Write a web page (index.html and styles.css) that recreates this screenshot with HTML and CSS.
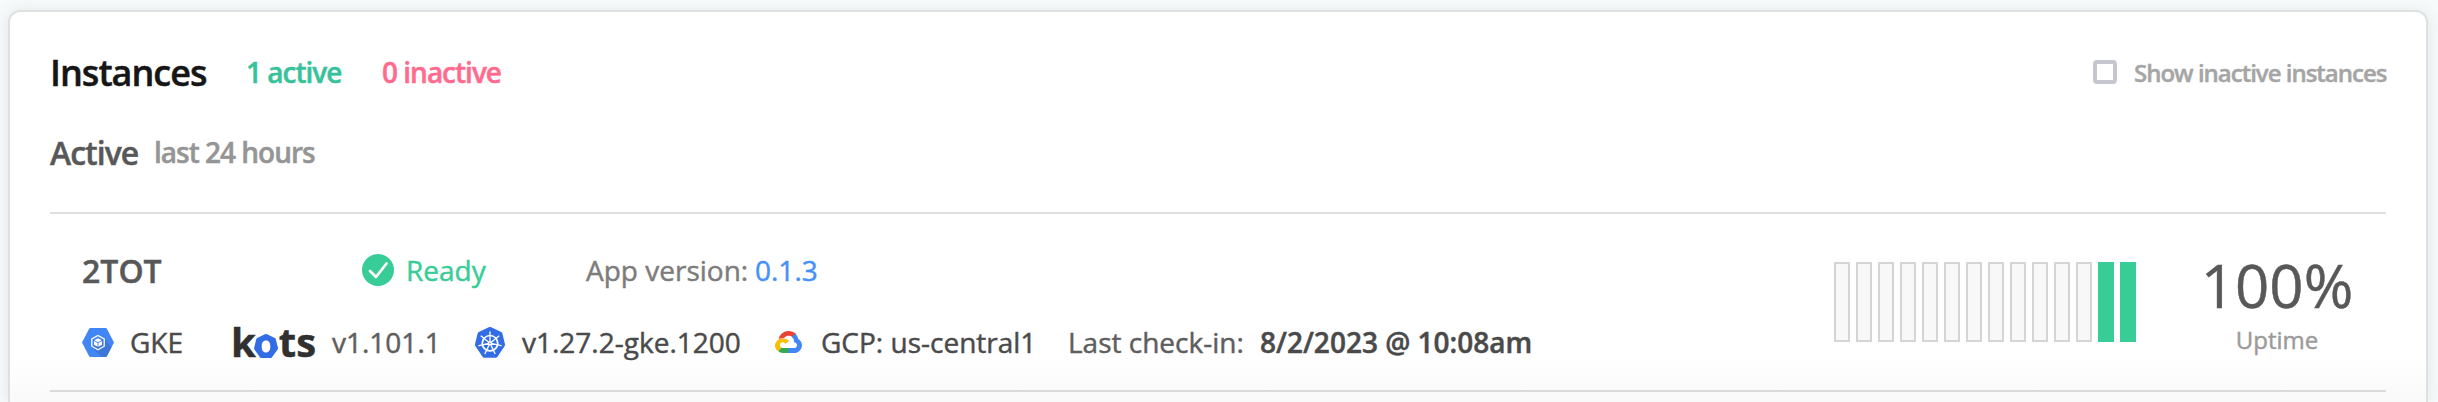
FILE: index.html
```html
<!DOCTYPE html>
<html lang="en">
<head>
<meta charset="utf-8">
<title>Instances</title>
<link rel="stylesheet" href="styles.css">
</head>
<body>
<section class="card">
  <header class="head">
    <h2 class="title">Instances</h2>
    <span class="count active">1 active</span>
    <span class="count inactive">0 inactive</span>
    <label class="toggle"><span class="box"></span><span class="toggle-text">Show inactive instances</span></label>
  </header>
  <div class="sub"><span class="sub-title">Active</span><span class="sub-note">last 24 hours</span></div>
  <article class="instance">
    <div class="info">
      <div class="line">
        <span class="name">2TOT</span>
        <svg class="check" viewBox="0 0 32 32"><circle cx="16" cy="16" r="16" fill="#38cc97"/><path d="M8 17l6 6L24.500 9.500" fill="none" stroke="#fff" stroke-width="2.800" stroke-linecap="round" stroke-linejoin="round"/></svg>
        <span class="ready">Ready</span>
        <span class="app">App version:</span>
        <a class="version">0.1.3</a>
      </div>
      <div class="line">
        <svg class="gke" viewBox="0 0 32 29"><path d="M8.500 0h15q1 0 1.500.900L32 14.500 25 28q-.500 1-1.500 1h-15Q7.500 29 7 28L0 14.500 7 .900Q7.500 0 8.500 0z" fill="#4285f4"/><path d="M22 10.500l7.500 8.700L25 28q-.500 1-1.500 1h-4L10 19z" fill="#3b72d0" opacity=".75"/><path d="M16 7.500l6.200 3.500v7.200L16 21.700l-6.200-3.500V11z" fill="none" stroke="#fff" stroke-width="1.300"/><path d="M16 10.300l3.700 2-3.700 2-3.700-2zM12 13l3.600 2v3.700L12 16.700zM20 13l-3.600 2v3.700l3.600-2z" fill="#fff"/></svg>
        <span class="txt t-gke">GKE</span>
        <span class="kots"><span>k</span><svg class="kots-o" viewBox="0 0 24 24"><path fill-rule="evenodd" d="M12 0q.6 0 1.100.300L20.800 4q.8.400 1 1.200L24 14q.1.800-.4 1.500L18 23.200q-.5.600-1.200.8H7.200q-.8-.1-1.300-.8L.4 15.500Q-.1 14.800.1 14L2.200 5.200Q2.400 4.400 3.200 4L10.900.3Q11.400 0 12 0zM12 6.500c-3 0-4.300 2.500-4.300 6s1.300 6 4.300 6 4.300-2.500 4.300-6-1.300-6-4.300-6z" fill="#326de6"/></svg><span class="ts">ts</span></span>
        <span class="txt light t-kots">v1.101.1</span>
        <svg class="k8s" viewBox="0 0 32 31"><path d="M16 0q.7 0 1.300.3L27.200 5q1 .5 1.200 1.500L31 17.300q.2 1-.5 1.900l-7 10.500q-.7 1-1.800 1h-11.400q-1.100 0-1.800-1l-7-10.500q-.7-.9-.5-1.900L3.600 6.500Q3.800 5.500 4.800 5L14.700.3Q15.300 0 16 0z" fill="#326de6"/><g fill="none" stroke="#fff" stroke-linecap="round"><circle cx="16" cy="16.200" r="7.700" stroke-width="1.700"/><path stroke-width="1.300" d="M16 16.200V4.800M16 16.200l8.900-7.100M16 16.200l11.100 2.500M16 16.200l5 10.300M16 16.200l-5 10.300M16 16.200L4.900 18.700M16 16.200L7.100 9.100"/></g><circle cx="16" cy="16.200" r="2" fill="#fff"/><circle cx="16" cy="16.200" r=".7" fill="#326de6"/></svg>
        <span class="txt t-k8s">v1.27.2-gke.1200</span>
        <svg class="gcp" viewBox="0 0 27 22"><path d="M17.500 6.200h1l2.300-2.400.1-1C16.500-1.100 9.800-.900 5.900 3.500c-1.100 1.200-1.900 2.800-2.300 4.400l.8-.1 4.700-.8.4-.4c2-2.200 5.600-2.500 8-.4z" fill="#ea4335"/><path d="M23.300 7.900c-.5-2-1.600-3.800-3.200-5.100l-3.200 3.300c1.400 1.100 2.200 2.800 2.100 4.600v.6c1.600 0 3 1.300 3 2.900s-1.400 2.900-3 2.900h-5.600l-.6.600v3.700l.6.600H19c4.400 0 8-3.500 8-7.800 0-2.500-1.400-4.800-3.700-6.300z" fill="#4285f4"/><path d="M7.800 22h5.600v-4.900H7.800c-.4 0-.8-.1-1.200-.3l-.8.300-2.400 2.200-.2.800C4.500 21.300 6.100 22 7.800 22z" fill="#34a853"/><path d="M7.800 7.400C3.500 7.400 0 10.800 0 14.700c0 2.200 1.200 4.200 3.200 5.500l3.400-3.400c-1.500-.7-2.100-2.400-1.400-3.800s2.400-2 3.900-1.400c.6.300 1.100.8 1.400 1.400L14 9.600c-1.500-1.500-3.800-2.200-6.200-2.200z" fill="#fbbc05"/></svg>
        <span class="txt t-gcp">GCP: us-central1</span>
        <span class="txt light t-last">Last check-in:</span>
        <strong class="txt date">8/2/2023 @ 10:08am</strong>
      </div>
    </div>
    <div class="bars"><i></i><i></i><i></i><i></i><i></i><i></i><i></i><i></i><i></i><i></i><i></i><i></i><i class="up"></i><i class="up"></i></div>
    <div class="uptime"><span class="pct">100%</span><span class="label">Uptime</span></div>
  </article>
</section>
</body>
</html>
```
FILE: styles.css
```css
* { box-sizing: border-box; }
body {
  margin: 0;
  padding: 10px 10px 0 8px;
  height: 402px;
  background: #f7fafb;
  font-family: "Open Sans", "Noto Sans", sans-serif;
  font-size: 28px;
  white-space: nowrap;
  -webkit-text-stroke: .45px currentColor;
}
.card {
  height: 392px;
  padding: 0 40px;
  border: 2px solid #dfe0e0;
  border-bottom: 0;
  border-radius: 12px 12px 0 0;
  background: linear-gradient(#fff 0, #fff 346px, #f9f9f9 390px);
  box-shadow: 0 2px 16px rgba(60, 90, 100, .13);
}
.head { display: flex; align-items: center; height: 120px; font-weight: 600; }
.title { margin: 0; width: 196px; font-size: 36px; font-weight: 600; letter-spacing: -1px; color: #161616; }
.count { letter-spacing: -1px; }
.active { width: 136px; color: #38c29b; }
.inactive { color: #ff6a8e; }
.toggle { display: flex; align-items: center; margin-left: auto; color: #a5a5a5; font-size: 24px; }
.box { width: 24px; height: 24px; margin-right: 17px; border: 4px solid #c5c6ce; border-radius: 4px; }
.toggle-text { width: 252px; letter-spacing: -1px; }
.sub { display: flex; align-items: center; height: 40px; margin-bottom: 40px; font-weight: 600; }
.sub-title { width: 104px; font-size: 32px; letter-spacing: -1px; color: #585858; }
.sub-note { letter-spacing: -1px; color: #959595; }
.instance {
  display: flex;
  height: 180px;
  padding-left: 32px;
  border-top: 2px solid #dedfdf;
  border-bottom: 2px solid #dadbdb;
}
.info { display: flex; flex-direction: column; gap: 32px; width: 1752px; padding-top: 36px; }
.line { display: flex; align-items: center; height: 40px; }
.line > * { flex: none; }
.name { width: 280px; font-size: 32px; font-weight: 600; color: #585858; }
.check { width: 32px; height: 32px; margin-right: 12px; }
.ready { width: 180px; color: #38cc97; font-weight: 500; }
.app { width: 169px; color: #7c7c7c; }
.version { color: #4591f7; font-weight: 500; }
.txt { color: #4a4a4a; }
.light { color: #5e5e5e; }
.gke { width: 32px; height: 29px; margin-right: 16px; }
.t-gke { width: 101px; }
.kots { display: flex; align-items: center; width: 101px; font-size: 40px; font-weight: 700; line-height: 40px; color: #303030; }
.kots-o { width: 24px; height: 24px; margin: 8px 1px 0 -2px; }
.t-kots { width: 142px; }
.k8s { width: 32px; height: 31px; margin-right: 16px; }
.t-k8s { width: 253px; }
.gcp { width: 27px; height: 22px; margin-right: 19px; }
.t-gcp { width: 247px; }
.t-last { width: 192px; }
.date { font-weight: 600; }
.bars { display: flex; gap: 6px; padding-top: 48px; }
.bars i { width: 16px; height: 80px; border: 2px solid #d5d5d5; background: #f8f8f8; }
.bars .up { border-color: #38cc97; background: #38cc97; }
.uptime { display: flex; flex-direction: column; align-items: center; width: 146px; margin-left: 68px; padding-top: 41px; }
.pct { font-size: 60px; line-height: 60px; color: #585858; }
.label { margin-top: 9px; font-size: 24px; line-height: 32px; color: #9b9b9b; }
```
